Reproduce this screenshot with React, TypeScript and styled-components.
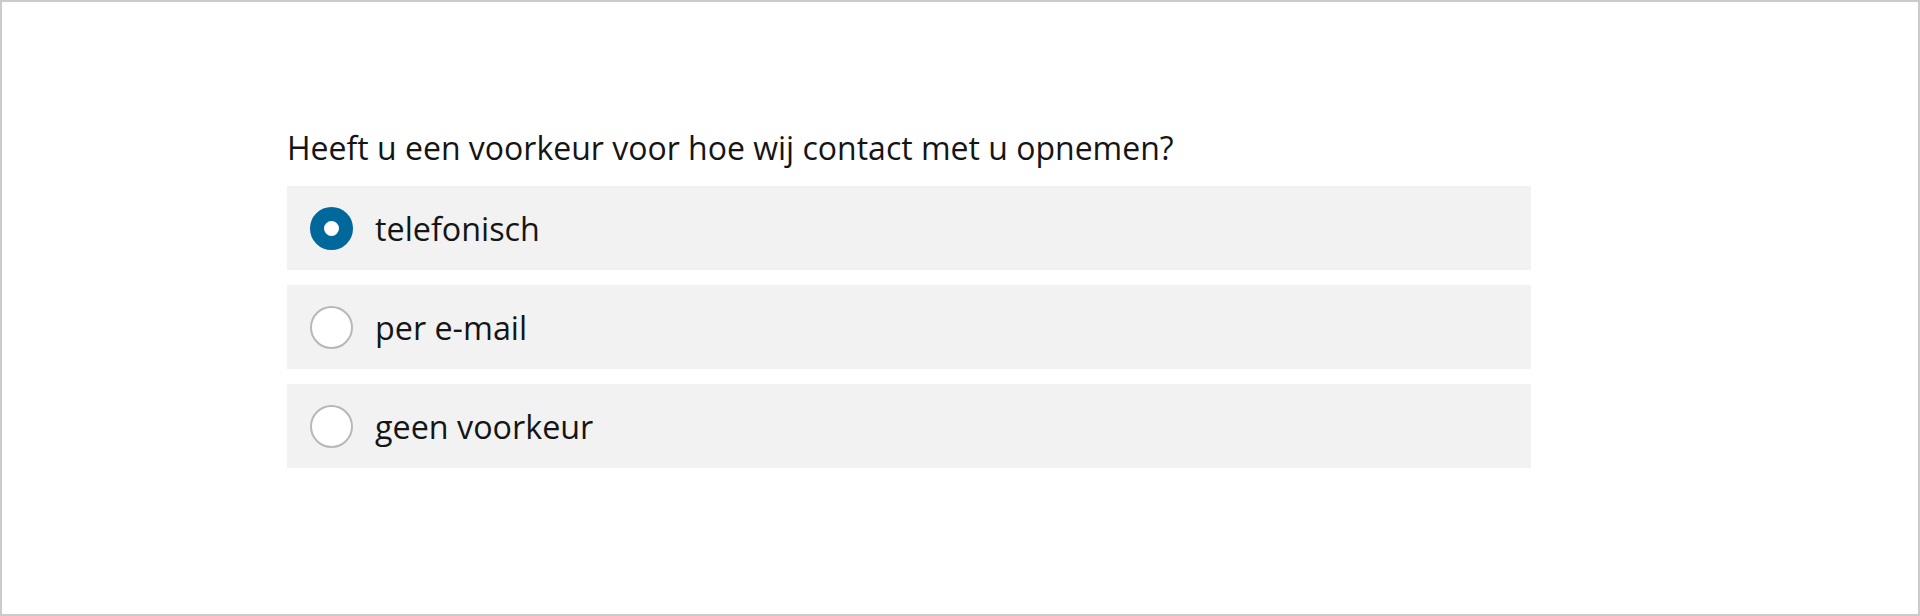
import { useState } from "react";
import styled, { createGlobalStyle } from "styled-components";

const GlobalStyle = createGlobalStyle`
  html, body {
    margin: 0;
    padding: 0;
    background: #ffffff;
  }
  * {
    box-sizing: border-box;
  }
`;

// Frame
const Frame = styled.div`
  width: 1920px;
  height: 616px;
  border: 2px solid #cbcbcb;
  background: #fff;
  padding: 124px 0 0 285px;
  font-family: "Open Sans", "Noto Sans", sans-serif;
  color: #151515;
`;

// Fieldset
const Fieldset = styled.fieldset`
  border: 0;
  margin: 0;
  padding: 0;
  width: 1244px;
  display: grid;
  gap: 15px;
`;

const Legend = styled.legend`
  padding: 0;
  margin: 0 0 16px;
  font-size: 32px;
  line-height: 44px;
`;

// Option row
const Option = styled.label`
  display: flex;
  align-items: center;
  gap: 22px;
  height: 84px;
  padding: 0 23px;
  background: #f2f2f2;
  cursor: pointer;
`;

const Radio = styled.input.attrs({ type: "radio" })`
  appearance: none;
  margin: 0;
  flex: none;
  width: 43px;
  height: 43px;
  border-radius: 50%;
  background: #fff;
  border: 2px solid #b8b8b8;
  cursor: pointer;

  &:checked {
    border: 14px solid #01689b;
  }
`;

const OptionText = styled.span`
  font-size: 32.3px;
`;

const options = ["telefonisch", "per e-mail", "geen voorkeur"];

export default function App() {
  const [value, setValue] = useState(options[0]);

  return (
    <>
      <GlobalStyle />
      <Frame>
        <Fieldset>
          <Legend>Heeft u een voorkeur voor hoe wij contact met u opnemen?</Legend>
          {options.map((opt) => (
            <Option key={opt}>
              <Radio
                name="contact"
                checked={value === opt}
                onChange={() => setValue(opt)}
              />
              <OptionText>{opt}</OptionText>
            </Option>
          ))}
        </Fieldset>
      </Frame>
    </>
  );
}
